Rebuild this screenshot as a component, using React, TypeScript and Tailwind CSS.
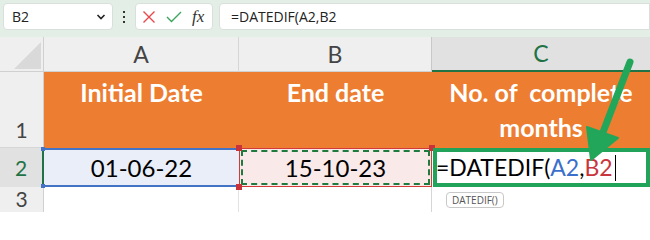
import React from "react";

export default function App() {
  const hdr = "flex items-center justify-center bg-[#efefef] text-[23px] text-[#444] border-r border-[#d6d6d6]";
  return (
    <div className="relative w-[650px] h-[212px] overflow-hidden bg-white" style={{ fontFamily: "Lato, 'Open Sans', sans-serif" }}>
      {/* formula bar */}
      <div className="h-[37px] bg-[#e3eee6] flex items-start pt-[3px] pl-[3px] gap-0">
        <div className="w-[110px] h-[27px] bg-white rounded-[4px] border border-[#d9dfdb] flex items-center justify-between pl-[8px] pr-[6px] text-[14px] text-[#222]" style={{ fontFamily: "'Open Sans', sans-serif" }}>
          <span>B2</span>
          <svg width="10" height="8" viewBox="0 0 10 8"><path d="M1.5 2 L5 5.5 L8.5 2" stroke="#222" strokeWidth="1.6" fill="none" /></svg>
        </div>
        <div className="w-[22px] h-[27px] flex flex-col items-center justify-center gap-[3px]">
          <span className="w-[2px] h-[2px] bg-[#333]" />
          <span className="w-[2px] h-[2px] bg-[#333]" />
          <span className="w-[2px] h-[2px] bg-[#333]" />
        </div>
        <div className="w-[78px] h-[27px] bg-white rounded-[4px] border border-[#d9dfdb] flex items-center pl-[6px] gap-[10px]">
          <svg width="14" height="14" viewBox="0 0 14 14"><path d="M1.5 1.5 L12.5 12.5 M12.5 1.5 L1.5 12.5" stroke="#e5484d" strokeWidth="1.4" fill="none" /></svg>
          <svg width="16" height="12" viewBox="0 0 16 12"><path d="M1 6 L5.5 10.5 L15 1" stroke="#3aa55d" strokeWidth="1.4" fill="none" /></svg>
          <span className="text-[17px] italic text-[#333] leading-none" style={{ fontFamily: "'Liberation Serif', serif" }}>fx</span>
        </div>
        <div className="ml-[6px] flex-1 h-[27px] bg-white rounded-l-[4px] border border-[#d9dfdb] flex items-center pl-[11px] text-[14px] text-[#222]" style={{ fontFamily: "'Open Sans', sans-serif" }}>
          =DATEDIF(A2,B2
        </div>
      </div>

      {/* grid */}
      <div className="grid grid-cols-[44px_195px_193px_218px] grid-rows-[35px_76px_39px_25px]">
        {/* header row */}
        <div className="bg-[#efefef] border-r border-b border-[#d0d0d0] relative">
          <svg className="absolute left-[14px] top-[5px]" width="27" height="27" viewBox="0 0 27 27"><path d="M27 0 L27 27 L0 27 Z" fill="#d9d9d9" /></svg>
        </div>
        <div className={hdr + " border-b border-b-[#d0d0d0]"}>A</div>
        <div className={hdr + " border-b border-b-[#d0d0d0] border-r-[#c8c8c8]"}>B</div>
        <div className="flex items-center justify-center bg-[#e1e1e1] text-[23px] text-[#217346] border-b-[2px] border-[#217346]">C</div>

        {/* row 1 */}
        <div className="bg-[#efefef] border-r border-[#d0d0d0] border-b border-b-[#d6d6d6] flex items-end justify-center pb-[2px] text-[21px] text-[#444]">1</div>
        <div className="bg-[#ed7d31] text-white font-bold text-[25px] text-center pt-[3px] leading-[35px]">Initial Date</div>
        <div className="bg-[#ed7d31] text-white font-bold text-[25px] text-center pt-[3px] leading-[35px]">End date</div>
        <div className="bg-[#ed7d31] text-white font-bold text-[25px] text-center pt-[3px] leading-[35px] whitespace-pre">{"No. of  complete\nmonths"}</div>

        {/* row 2 */}
        <div className="bg-[#e1e1e1] border-r-[2px] border-[#217346] flex items-center justify-center text-[21px] text-[#217346]">2</div>
        <div className="relative bg-[#e9eef8] border-y-[2px] border-[#4472c4] flex items-center justify-center text-[24px] text-black">
          01-06-22
          <span className="absolute left-[-3px] top-[-3px] w-[4px] h-[4px] bg-[#4472c4]" />
          <span className="absolute left-[-3px] bottom-[-3px] w-[4px] h-[4px] bg-[#4472c4]" />
        </div>
        <div className="relative bg-[#f9e9e9] border border-[#d33a3a] flex items-center justify-center text-[24px] text-black">
          <div className="absolute inset-[1px] border-[2px] border-dashed border-[#1f7a3d]" />
          <span className="relative">15-10-23</span>
          <span className="absolute left-[-4px] top-[-4px] w-[6px] h-[6px] bg-[#c8323a]" />
          <span className="absolute left-[-4px] bottom-[-4px] w-[6px] h-[6px] bg-[#c8323a]" />
          <span className="absolute right-[-4px] top-[-4px] w-[6px] h-[6px] bg-[#c8323a]" />
        </div>
        <div className="relative bg-white border-[4px] border-[#21a35a] flex items-center text-[23px] text-black z-10 ml-[1px]">
          <span className="-ml-[1px]">=DATEDIF(</span>
          <span className="text-[#3a6fcc]">A2</span>
          <span>,</span>
          <span className="text-[#c9353c]">B2</span>
          <span className="ml-[2px] w-[1px] h-[26px] bg-black" />
        </div>

        {/* row 3 */}
        <div className="bg-[#efefef] border-r border-[#d0d0d0] flex items-start justify-center text-[21px] text-[#444] leading-[24px]">3</div>
        <div className="border-r border-[#e2e2e2]" />
        <div className="border-r border-[#d6d6d6]" />
        <div className="relative">
          <div className="absolute left-[14px] top-[5px] h-[16px] px-[5px] rounded-[4px] border border-[#c8c8c8] bg-white text-[10px] text-[#555] flex items-center" style={{ fontFamily: "'Open Sans', sans-serif" }}>DATEDIF()</div>
        </div>
      </div>

      {/* arrow */}
      <svg className="absolute left-0 top-0 pointer-events-none z-20" width="650" height="212" viewBox="0 0 650 212">
        <line x1="630" y1="62" x2="600" y2="140" stroke="#22a65a" strokeWidth="7" strokeLinecap="round" />
        <path d="M587 127 L618 138 L591 160 Z" fill="#22a65a" stroke="#22a65a" strokeWidth="2" strokeLinejoin="round" />
      </svg>
    </div>
  );
}
